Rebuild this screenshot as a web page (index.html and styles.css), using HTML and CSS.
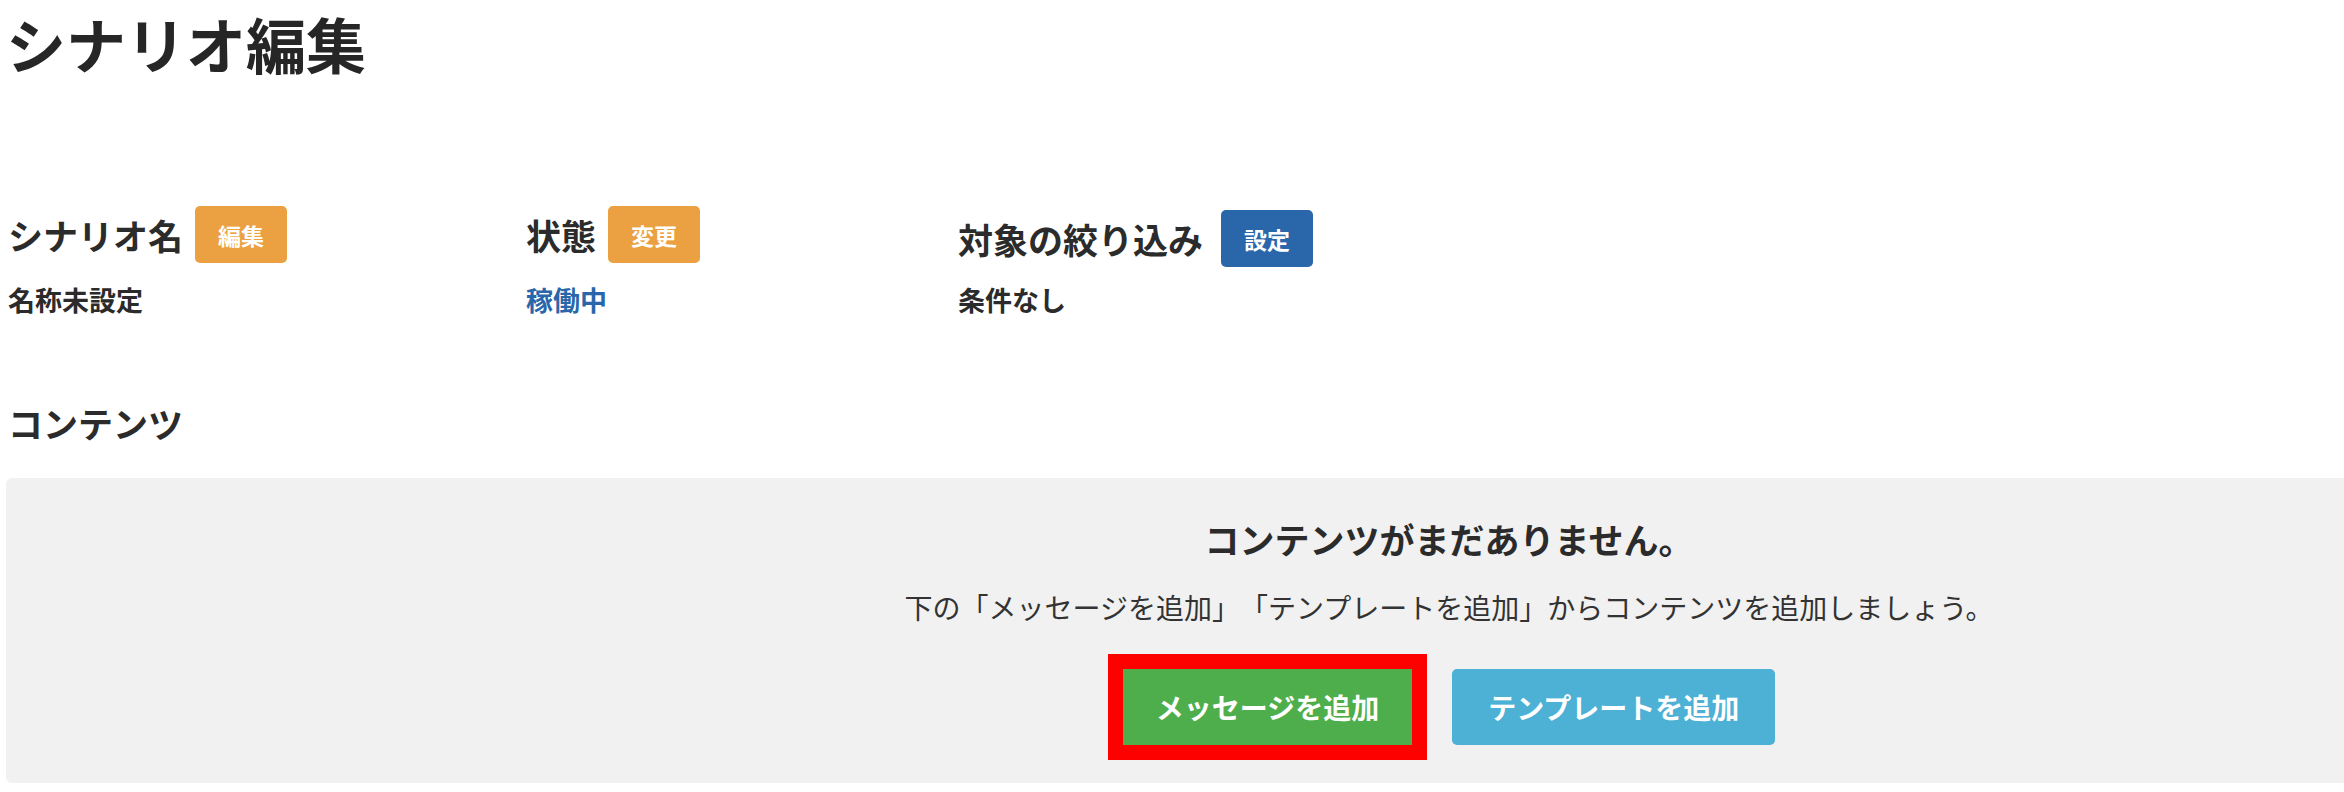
FILE: index.html
```html
<!DOCTYPE html>
<html lang="ja">
<head>
<meta charset="utf-8">
<title>シナリオ編集</title>
<link rel="stylesheet" href="styles.css">
</head>
<body>
<div class="page">
  <h1 class="page-title">シナリオ編集</h1>

  <div class="props">
    <div class="prop">
      <div class="prop-head">
        <span class="prop-label">シナリオ名</span>
        <span class="badge badge-orange">編集</span>
      </div>
      <div class="prop-value">名称未設定</div>
    </div>
    <div class="prop">
      <div class="prop-head">
        <span class="prop-label">状態</span>
        <span class="badge badge-orange">変更</span>
      </div>
      <div class="prop-value prop-value-link">稼働中</div>
    </div>
    <div class="prop prop-filter">
      <div class="prop-head">
        <span class="prop-label">対象の絞り込み</span>
        <span class="badge badge-blue">設定</span>
      </div>
      <div class="prop-value">条件なし</div>
    </div>
  </div>

  <h2 class="section-title">コンテンツ</h2>

  <div class="empty-panel">
    <div class="empty-title">コンテンツがまだありません。</div>
    <div class="empty-text">下の「メッセージを追加」「テンプレートを追加」からコンテンツを追加しましょう。</div>
    <div class="empty-actions">
      <button class="btn btn-green btn-highlight">メッセージを追加</button>
      <button class="btn btn-cyan">テンプレートを追加</button>
    </div>
  </div>
</div>
</body>
</html>
```

FILE: styles.css
```css
html, body {
  overflow: hidden;
}

body {
  margin: 8px 0 0 0;
  background: #ffffff;
  color: #2b2b2b;
  font-family: "Noto Sans CJK JP", "Noto Sans", sans-serif;
  text-spacing-trim: space-all;
}

.page {
  width: 2892px;
  padding-left: 6px;
  box-sizing: border-box;
}

.page-title {
  margin: 0;
  font-size: 60px;
  line-height: 70px;
  font-weight: 700;
  color: #262626;
}

.props {
  display: grid;
  grid-template-columns: 518px 432px auto;
  margin-top: 128px;
  padding-left: 2px;
}

.prop {
  display: flex;
  flex-direction: column;
}

.prop-head {
  display: flex;
  align-items: center;
  gap: 12px;
  height: 57px;
}

.prop-filter .prop-head {
  margin-top: 4px;
  gap: 18px;
}

.prop-label {
  font-size: 35px;
  font-weight: 700;
  line-height: 57px;
}

.badge {
  display: inline-flex;
  align-items: center;
  justify-content: center;
  width: 92px;
  height: 57px;
  border-radius: 5px;
  color: #ffffff;
  font-size: 23px;
  font-weight: 700;
}

.badge-orange {
  background: #eba141;
}

.badge-blue {
  background: #2a66aa;
}

.prop-value {
  margin-top: 17px;
  font-size: 27px;
  line-height: 40px;
  font-weight: 700;
  color: #2b2b2b;
}

.prop-filter .prop-value {
  margin-top: 13px;
}

.prop-value-link {
  color: #2a66aa;
}

.section-title {
  margin: 78px 0 0 2px;
  font-size: 35px;
  line-height: 50px;
  font-weight: 700;
}

.empty-panel {
  margin-top: 30px;
  background: #f1f1f1;
  border-radius: 6px;
  padding: 37px 0 38px;
  display: flex;
  flex-direction: column;
  align-items: center;
}

.empty-title {
  font-size: 35px;
  line-height: 48px;
  font-weight: 700;
  color: #2b2b2b;
}

.empty-text {
  margin-top: 24px;
  font-size: 28px;
  line-height: 40px;
  color: #333333;
}

.empty-actions {
  margin-top: 42px;
  display: flex;
  gap: 40px;
}

.btn {
  border: none;
  border-radius: 5px;
  height: 76px;
  padding: 0 33px;
  font-family: "Noto Sans CJK JP", "Noto Sans", sans-serif;
  font-size: 28px;
  font-weight: 700;
  color: #ffffff;
}

.btn-green {
  background: #4fae4c;
}

.btn-cyan {
  background: #4cb1d5;
  padding: 0 36px;
}

.btn-highlight {
  outline: 15px solid #fd0000;
  border-radius: 0;
}
```
